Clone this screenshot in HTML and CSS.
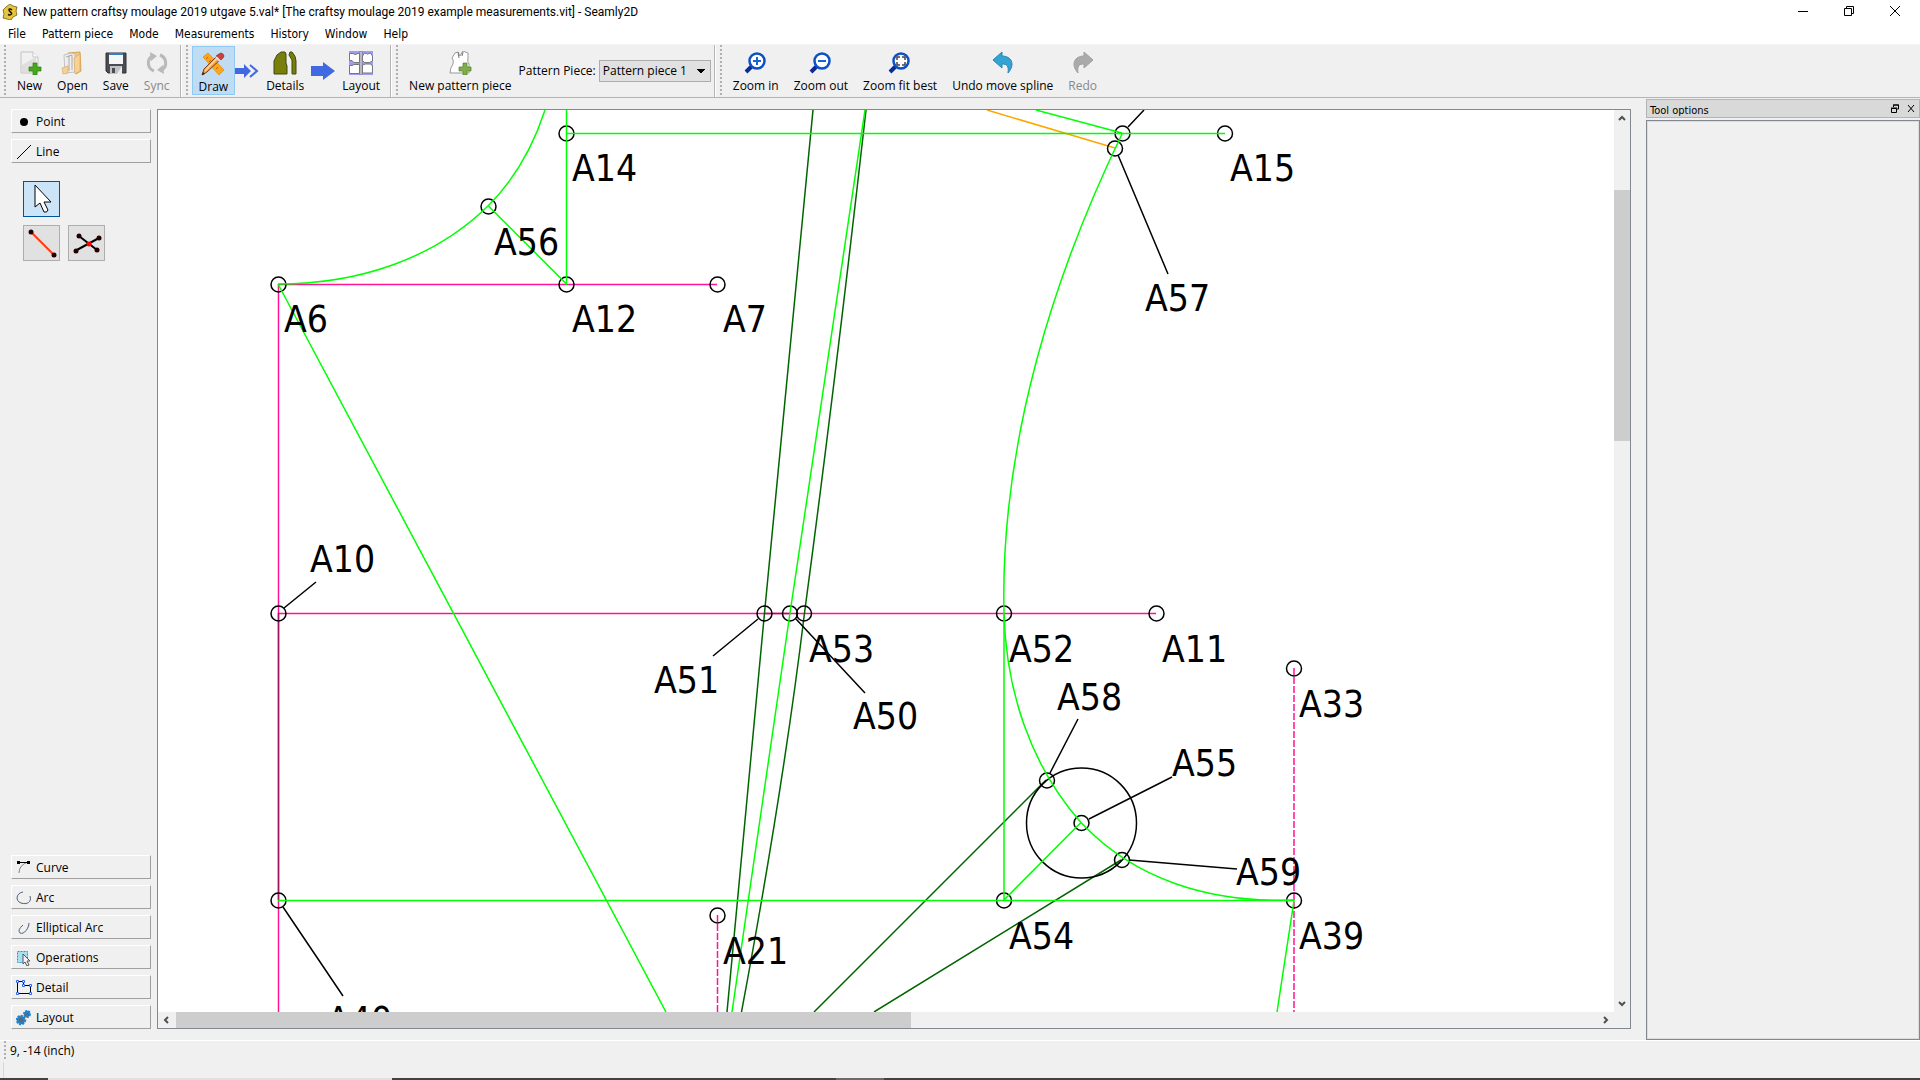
FILE: index.html
```
<!DOCTYPE html>
<html lang="en">
<head>
	<meta charset="utf-8">
	<meta name="viewport" content="width=device-width, initial-scale=1">
	<title>Seamly2D</title>
	<link rel="stylesheet" href="styles.css">
</head>
<body>
	<header class="titlebar">
		<svg class="app-icon" width="16" height="16" viewBox="0 0 16 16">
			<path d="M4 3L8 0l3 2 4 1-1 4 1 4-4 2-2 3-4-1-4-1 1-4-1-4z" fill="#e8c63c" stroke="#6b5a17" stroke-width=".8"/>
			<path d="M10 6C8 4 6 5 7.500 7s3 2 1.500 3.500c-1 1-2 .5-3 0" fill="none" stroke="#1d1a08" stroke-width="1.500"/>
		</svg>
		<h1 class="title">New pattern craftsy moulage 2019 utgave 5.val* [The craftsy moulage 2019 example measurements.vit] - Seamly2D</h1>
		<div class="window-buttons">
			<button aria-label="Minimize"><svg width="10" height="10"><path d="M0 5.5h10"/></svg></button>
			<button aria-label="Restore"><svg width="10" height="10"><path d="M.5 2.5h7v7h-7zM2.5 2.5v-2h7v7h-2"/></svg></button>
			<button aria-label="Close"><svg width="10" height="10"><path d="M0 0l10 10M10 0L0 10"/></svg></button>
		</div>
	</header>

	<nav class="menubar">
		<button>File</button>
		<button>Pattern piece</button>
		<button>Mode</button>
		<button>Measurements</button>
		<button>History</button>
		<button>Window</button>
		<button>Help</button>
	</nav>

	<div class="toolbars">
		<div class="toolbar">
			<button class="tool">
				<svg width="24" height="24" viewBox="0 0 24 24">
					<path d="M3 1h12l5 5v16H3z" fill="#f1f1f1" stroke="#c4c4c4"/>
					<path d="M4 14L18 6v15H4z" fill="#dedede"/>
					<path d="M15 1v5h5" fill="#fff" stroke="#c4c4c4"/>
					<path d="M15 12h4v4h4v4h-4v4h-4v-4h-4v-4h4z" fill="#48a81c" stroke="#2f7d13" stroke-width=".7"/>
				</svg>
				<span>New</span>
			</button>
			<button class="tool">
				<svg width="24" height="24" viewBox="0 0 24 24">
					<path d="M8 2l12-1 1 19-5 3z" fill="#f0c680" stroke="#d6a45a"/>
					<path d="M4 4l7-2 4 1v18l-10 1z" fill="#eee" stroke="#b6b6b6" stroke-width=".8"/>
					<path d="M6 6l6-2v15M9 5v15" fill="none" stroke="#999" stroke-width=".8"/>
					<path d="M2 17l6-2v7l-5 1zM14 7l6-4v17l-5 3z" fill="#f7d294" stroke="#d8aa64" stroke-width=".7"/>
				</svg>
				<span>Open</span>
			</button>
			<button class="tool">
				<svg width="24" height="24" viewBox="0 0 24 24">
					<path d="M2 2h20v20H4l-2-2z" fill="#4a4c52" stroke="#303238"/>
					<path d="M5 2h14v11H5z" fill="#f4f6f8"/>
					<path d="M5 2h14v2H5z" fill="#377fc4"/>
					<path d="M6 15h12v8H6z" fill="#bfc2c6"/>
					<path d="M8 17h3v5H8z" fill="#4a4c52"/>
					<path d="M18 15v8h-5z" fill="#ececec"/>
				</svg>
				<span>Save</span>
			</button>
			<button class="tool" disabled>
				<svg width="24" height="24" viewBox="0 0 24 24">
					<path d="M9 20A8.500 8.500 0 0 1 7 5M15 4a8.500 8.500 0 0 1 2 15" fill="none" stroke="#b9b9b9" stroke-width="3"/>
					<path d="M5 1l7 4-6 5zM19 23l-7-4 6-5z" fill="#b9b9b9"/>
				</svg>
				<span>Sync</span>
			</button>
		</div>

		<div class="toolbar">
			<button class="tool active">
				<svg width="24" height="24" viewBox="0 0 24 24">
					<path d="M2 5l5-4 16 17-5 5z" fill="#ffa51d" stroke="#e68600" stroke-width=".7"/>
					<path d="M5 7l2-2m1 5l2-2m5 9l2-2" stroke="#b86b00"/>
					<path d="M1 23l2-6L18 2l4 3L6 20z" fill="#f0a04a" stroke="#7d3e18"/>
					<path d="M4 19L18 4" stroke="#ffd7a0" stroke-width="1.5"/>
					<path d="M18 2q2-2 4 0t0 4l-2 2-5-4z" fill="#cf4040" stroke="#8e3333" stroke-width=".7"/>
					<path d="M15 5l4 4" stroke="#ddd" stroke-width="2"/>
					<path d="M1 23l1-3 2 2z" fill="#222"/>
				</svg>
				<span>Draw</span>
			</button>
			<svg class="flow" width="24" height="24" viewBox="0 0 24 24">
				<path d="M0 9h9V5l7 7-7 7v-4H0z" fill="#4169e1"/>
				<path d="M15 6l7 6-7 6" fill="none" stroke="#4169e1" stroke-width="2"/>
			</svg>
			<button class="tool">
				<svg width="24" height="24" viewBox="0 0 24 24">
					<path d="M1 23V10l3-6 4-3h4l1 2v9l1 3v8z" fill="#7a7e0a" stroke="#3f4a10"/>
					<path d="M17 1h2q4 4 4 9v13h-4V9l-3-5z" fill="#7a7e0a" stroke="#3f4a10"/>
				</svg>
				<span>Details</span>
			</button>
			<svg class="flow" width="24" height="24" viewBox="0 0 24 24">
				<path d="M0 7h12V3l12 9-12 9v-4H0z" fill="#4169e1"/>
			</svg>
			<button class="tool">
				<svg width="24" height="24" viewBox="0 0 24 24">
					<path d="M0 0h24v24H0z" fill="#9f9cf5"/>
					<path d="M.5 2.500H4l2 1 3-1h1.500v9H5l-2-2H.500zM.5 14.500H3l2-1h5.500v9H.500zM13.500 5l2-3 3 1 3-1 2 3v5l-3 1.500h-5l-2-2zM13.500 14l3-1h5l2 2v7h-10zM11 0h2v24h-2z" fill="#fff" stroke="#77777f"/>
				</svg>
				<span>Layout</span>
			</button>
		</div>

		<div class="toolbar">
			<button class="tool">
				<svg width="24" height="24" viewBox="0 0 24 24">
					<path d="M7 2l3-1 2 4 3-5 5 2v5q-1 4 1 6v9H2q0-5 3-9 1-4-1-6z" fill="#fff" stroke="#999"/>
					<path d="M10 1l1 6M15 1l-1 4" stroke="#777" fill="none"/>
					<path d="M15 12h4v4h4v4h-4v4h-4v-4h-4v-4h4z" fill="#7fae4b" stroke="#557d32" stroke-width=".7"/>
				</svg>
				<span>New pattern piece</span>
			</button>
			<div class="piece">
				<label for="piece">Pattern Piece:</label>
				<select id="piece"><option>Pattern piece 1</option></select>
			</div>
		</div>

		<div class="toolbar">
			<button class="tool">
				<svg width="24" height="24" viewBox="0 0 24 24">
					<path d="M8 15l-6 6" stroke="#0b2a94" stroke-width="4"/>
					<circle cx="13" cy="10" r="7.500" fill="#fff" stroke="#0d4fc4" stroke-width="2.500"/>
					<path d="M9 10h8M13 6v8" stroke="#1762d4" stroke-width="2"/>
				</svg>
				<span>Zoom in</span>
			</button>
			<button class="tool">
				<svg width="24" height="24" viewBox="0 0 24 24">
					<path d="M8 15l-6 6" stroke="#0b2a94" stroke-width="4"/>
					<circle cx="13" cy="10" r="7.500" fill="#fff" stroke="#0d4fc4" stroke-width="2.500"/>
					<path d="M9 10h8" stroke="#1762d4" stroke-width="2"/>
				</svg>
				<span>Zoom out</span>
			</button>
			<button class="tool">
				<svg width="24" height="24" viewBox="0 0 24 24">
					<path d="M8 15l-6 6" stroke="#0b2a94" stroke-width="4"/>
					<circle cx="13" cy="10" r="7.500" fill="#fff" stroke="#0d4fc4" stroke-width="2.500"/>
					<path d="M9 9V6h3M14 6h3v3M17 11v3h-3M12 14H9v-3" fill="none" stroke="#444" stroke-width="1.500"/>
				</svg>
				<span>Zoom fit best</span>
			</button>
			<button class="tool">
				<svg width="24" height="24" viewBox="0 0 24 24">
					<path d="M2 9l9-8v4c9 0 14 8 6 17 1-7-1-9-6-9v4z" fill="#32a3d2" stroke="#2585b4"/>
				</svg>
				<span>Undo move spline</span>
			</button>
			<button class="tool" disabled>
				<svg width="24" height="24" viewBox="0 0 24 24">
					<path d="M22 9l-9-8v4C4 5-1 13 7 22c-1-7 1-9 6-9v4z" fill="#aaa" stroke="#a0a0a0"/>
				</svg>
				<span>Redo</span>
			</button>
		</div>
	</div>

	<main class="workspace">
		<aside class="toolbox">
			<button class="group">
				<svg width="16" height="16"><circle cx="8" cy="8" r="4"/></svg>Point
			</button>
			<button class="group">
				<svg width="16" height="16"><path d="M1 15L15 1" stroke="#000"/></svg>Line
			</button>
			<div class="tool-grid">
				<button class="square selected" aria-label="Select">
					<svg width="32" height="32"><path d="M9 2v22l5-4 4 9q3 1 4-2l-4-8h7z" fill="#fff" stroke="#000"/></svg>
				</button>
				<div class="grid-row">
					<button class="square" aria-label="Line between points">
						<svg width="32" height="32"><path d="M5 5l23 23" stroke="#ff3a10" stroke-width="2"/><circle cx="5" cy="5" r="2.500" fill="#200"/><circle cx="28" cy="28" r="2.500" fill="#200"/></svg>
					</button>
					<button class="square" aria-label="Line intersection">
						<svg width="32" height="32"><path d="M8 9l18 14M28 11L4 24" stroke="#000" stroke-width="2"/><g fill="#200"><circle cx="8" cy="9" r="2.500"/><circle cx="26" cy="23" r="2.500"/><circle cx="28" cy="11" r="2.500"/><circle cx="5" cy="24" r="2.500"/></g><circle cx="18" cy="17" r="2.500" fill="#f00"/></svg>
					</button>
				</div>
			</div>
			<button class="group">
				<svg width="16" height="16"><path d="M3 13q0-8 9-11" fill="none" stroke="#758297"/><path d="M2 2.500h12" stroke="#000"/><path d="M1 1h3v3H1zM11 1h3v3h-3z"/></svg>Curve
			</button>
			<button class="group">
				<svg width="16" height="16"><path d="M7 2C0 3-1 11 5 13s11-1 9-7" fill="none" stroke="#506078"/></svg>Arc
			</button>
			<button class="group">
				<svg width="16" height="16"><path d="M7 5Q1 10 4 13c4 2 9-5 9-10" fill="none" stroke="#506078"/></svg>Elliptical Arc
			</button>
			<button class="group">
				<svg width="16" height="16"><path d="M1.500 1.500h10v11h-10z" fill="#a9dff3" stroke="#189ad6" stroke-dasharray="2 1"/><path d="M7 4v10l2-2 2 4 2-1-2-4h3z" fill="#f4f4f4" stroke="#555"/></svg>Operations
			</button>
			<button class="group">
				<svg width="16" height="16"><path d="M1.500 1.500v12h13v-8h-7v-4z" fill="none" stroke="#000"/><path d="M.5.500h2v2h-2zM6.500.500h2v2h-2zM6.500 4.500h2v2h-2zM13.500 4.500h2v2h-2zM.5 12.500h2v2h-2zM13.500 12.500h2v2h-2z" fill="#fff" stroke="#2b62e8"/></svg>Detail
			</button>
			<button class="group">
				<svg width="16" height="16"><g fill="#5c6670" stroke="#1687d9"><circle cx="5" cy="10" r="4" stroke-width="2.500" stroke-dasharray="2 1"/><circle cx="5" cy="10" r="2.500"/><circle cx="11" cy="4" r="3" stroke-width="2" stroke-dasharray="2 1"/><circle cx="11" cy="4" r="1.500"/></g></svg>Layout
			</button>
		</aside>

		<section class="view">
			<!-- the drawing keeps scene coordinates, shifted to the view's origin -->
			<svg class="scene">
				<g transform="translate(-158 -110)">
					<g class="pink">
						<path d="M278 284.500H717M278.500 284V1012M278 613.500H1156"/>
						<path class="dash" d="M1294 668V1012M717.500 915V1012"/>
					</g>
					<path class="orange" d="M987 110L1115 148"/>
					<path class="wine" d="M278.500 613V900M764 613.500H790"/>
					<g class="dark">
						<path d="M813 110L764.500 613 727 1012"/>
						<path d="M866 110Q835 385 804.500 613Q783 790 741.500 1012"/>
						<path d="M1046 780L814 1012M1121 860L874 1012"/>
					</g>
					<g class="points">
						<circle cx="566.500" cy="133.500" r="7.500"/>
						<circle cx="1225" cy="133.500" r="7.500"/>
						<circle cx="1122.500" cy="133.500" r="7.500"/>
						<circle cx="1115" cy="148.500" r="7.500"/>
						<circle cx="488.500" cy="206.500" r="7.500"/>
						<circle cx="278.500" cy="284.500" r="7.500"/>
						<circle cx="566.500" cy="284.500" r="7.500"/>
						<circle cx="717.500" cy="284.500" r="7.500"/>
						<circle cx="278.500" cy="613.500" r="7.500"/>
						<circle cx="764.500" cy="613.500" r="7.500"/>
						<circle cx="790" cy="613.500" r="7.500"/>
						<circle cx="804" cy="613.500" r="7.500"/>
						<circle cx="1004" cy="613.500" r="7.500"/>
						<circle cx="1156.500" cy="613.500" r="7.500"/>
						<circle cx="1294" cy="668.500" r="7.500"/>
						<circle cx="1047" cy="780.500" r="7.500"/>
						<circle cx="1081.500" cy="823" r="7.500"/>
						<circle cx="1122" cy="860" r="7.500"/>
						<circle cx="1004" cy="900.500" r="7.500"/>
						<circle cx="1294" cy="900.500" r="7.500"/>
						<circle cx="278.500" cy="900.500" r="7.500"/>
						<circle cx="717.500" cy="915.500" r="7.500"/>
						<circle cx="1081.500" cy="823" r="55"/>
					</g>
					<g class="green">
						<path d="M566 133.500H1225M566.500 110V284L488.500 206M1036 110L1122 133"/>
						<path d="M278 284C360 284 435 258 488 206C512 182 532 150 545 110"/>
						<path d="M278 284L666 1012M278 900.500H1294L1277 1012"/>
						<path d="M865 110L790 613 732 1012"/>
						<path d="M1122.500 133C1056 270 1000 440 1004 613V900L1081 822.500"/>
						<path d="M1004 613C1006 690 1030 765 1081 822.500C1135 880 1210 903 1294 900"/>
					</g>
					<g class="leaders">
						<path d="M1128 127L1144 110M1118 155L1168 274M284 608L316 582M758 619L713 656M796 619L865 693"/>
						<path d="M1050 773L1078 719M1089 819L1172 777M1129 860L1237 869M283 907L343 996"/>
					</g>
					<g class="labels">
						<text x="572" y="181">A14</text>
						<text x="1230" y="181">A15</text>
						<text x="494" y="255">A56</text>
						<text x="1145" y="311">A57</text>
						<text x="284" y="332">A6</text>
						<text x="572" y="332">A12</text>
						<text x="723" y="332">A7</text>
						<text x="310" y="572">A10</text>
						<text x="654" y="693">A51</text>
						<text x="809" y="662">A53</text>
						<text x="853" y="729">A50</text>
						<text x="1009" y="662">A52</text>
						<text x="1162" y="662">A11</text>
						<text x="1057" y="710">A58</text>
						<text x="1299" y="717">A33</text>
						<text x="1172" y="776">A55</text>
						<text x="1236" y="885">A59</text>
						<text x="1009" y="949">A54</text>
						<text x="1299" y="949">A39</text>
						<text x="723" y="964">A21</text>
						<text x="327" y="1033">A40</text>
					</g>
				</g>
			</svg>
			<div class="scroll vertical">
				<svg width="16" height="16"><path d="M5 10l3-3 3 3"/></svg>
				<div class="track"><div class="thumb"></div></div>
				<svg width="16" height="16"><path d="M5 6l3 3 3-3"/></svg>
			</div>
			<div class="scroll horizontal">
				<svg width="16" height="16"><path d="M10 5L7 8l3 3"/></svg>
				<div class="track"><div class="thumb"></div></div>
				<svg width="16" height="16"><path d="M6 5l3 3-3 3"/></svg>
			</div>
		</section>

		<aside class="dock">
			<div class="dock-title">
				<h2>Tool options</h2>
				<button aria-label="Float"><svg width="8" height="9"><path d="M2.500 3V1h5v4H6M2 1h6M.5 4.500h5v4h-5zM0 4h6"/></svg></button>
				<button aria-label="Close panel"><svg width="8" height="9"><path d="M1 1l6 7M7 1L1 8"/></svg></button>
			</div>
			<div class="dock-body"></div>
		</aside>
	</main>

	<footer class="status">
		<div class="position">9, -14 (inch)</div>
		<div class="message"></div>
	</footer>
	<div class="edge"><span></span><span></span></div>
</body>
</html>
```
FILE: styles.css
```
* {box-sizing: border-box;}
body {
	margin: 0;
	height: 100vh;
	overflow: hidden;
	display: flex;
	flex-direction: column;
	background: #f0f0f0;
	color: #000;
	font: 12px/16px "Open Sans", "Noto Sans", sans-serif;
}
button {
	font: inherit;
	color: inherit;
	background: none;
	border: none;
	padding: 0;
	margin: 0;
}
svg {display: block; flex: none;}
h1, h2 {margin: 0; font-size: 12px; font-weight: normal;}

/* title and menu */
.titlebar, .menubar {
	display: flex;
	align-items: center;
	background: #fff;
	font-family: "DejaVu Sans Condensed", "Noto Sans", sans-serif;
}
.titlebar {height: 23px; padding: 0 2px; gap: 5px;}
.title {flex: 1; white-space: nowrap; font-family: Roboto, "Noto Sans", sans-serif;}
.window-buttons {display: flex;}
.window-buttons button {width: 46px; height: 20px; padding-bottom: 2px; display: flex; justify-content: center; align-items: center;}
.window-buttons path {fill: none; stroke: #000;}
.menubar {height: 22px; border-bottom: 1px solid #f4f4f4;}
.menubar button {padding: 0 8px;}

/* toolbars */
.toolbars {
	display: flex;
	height: 53px;
	border-bottom: 1px solid #b4b4b4;
}
.toolbar {
	display: flex;
	padding: 1px 3px 2px 10px;
	border-left: 1px solid #fff;
	border-right: 1px solid #b4b4b4;
	background: radial-gradient(circle, #b0b0b0 1px, transparent 1px) 3px 3px / 4px 4px repeat-y;
}
.toolbar:first-child {border-left: none;}
.toolbar:last-child {border-right: none;}
.tool {
	display: flex;
	flex-direction: column;
	align-items: center;
	gap: 3px;
	padding: 4px 6px 0;
	border: 1px solid transparent;
	white-space: nowrap;
}
.tool + .tool {margin-left: 1px;}
.tool:disabled {color: #888;}
.tool.active {background: #c0dcf3; border-color: #90c8f6; padding-top: 5px;}
.flow {margin-top: 13px;}
.piece {display: flex; align-items: center; padding-top: 1px;}
.piece select {
	appearance: none;
	width: 112px;
	height: 22px;
	margin-left: 3px;
	padding: 0 3px;
	border: 1px solid #adadad;
	border-radius: 0;
	color: #000;
	background: #e1e1e1;
	background-image: linear-gradient(to top right, transparent 50%, #000 50%), linear-gradient(to top left, transparent 50%, #000 50%);
	background-size: 4px 4px;
	background-position: 97px 8px, 101px 8px;
	background-repeat: no-repeat;
	font: inherit;
}

/* left panel, drawing, right panel */
.workspace {flex: 1; display: flex; min-height: 0;}
.toolbox {
	width: 157px;
	padding: 11px 6px 11px 11px;
	display: flex;
	flex-direction: column;
	gap: 6px;
}
.group {
	display: flex;
	align-items: center;
	gap: 4px;
	height: 24px;
	padding: 1px 0 0 4px;
	border: 1px solid #a0a0a0;
	border-top-color: #fff;
	border-left-color: #fff;
}
.tool-grid {flex: 1; padding: 12px;}
.grid-row {display: flex; gap: 8px; margin-top: 8px;}
.square {display: block; width: 37px; height: 36px; padding: 0 2px; border: 1px solid #adadad; background: #e1e1e1;}
.square.selected {border-color: #005499; background: #cce4f7;}

.view {
	flex: 1;
	margin: 11px 0;
	border: 1px solid #828790;
	display: grid;
	grid-template-columns: 1fr 16px;
	grid-template-rows: 1fr 16px;
	min-width: 0;
}
.scene {width: 100%; height: 100%; background: #fff; overflow: hidden;}
.scene path, .scene circle {fill: none; stroke-width: 1.5px;}
.pink {stroke: #ff1493;}
.dash {stroke-dasharray: 7 2;}
.orange {stroke: #ffa500;}
.wine {stroke: #a01560;}
.dark {stroke: #006400;}
.green {stroke: #0f0;}
.points, .leaders {stroke: #000;}
.labels {font-family: "DejaVu Sans Condensed", "Noto Sans", sans-serif; font-size: 37px;}
.scroll {display: flex; background: #f0f0f0;}
.scroll path {fill: none; stroke: #505050; stroke-width: 2px;}
.scroll .track {flex: 1; display: flex;}
.scroll .thumb {background: #cdcdcd;}
.vertical {flex-direction: column;}
.vertical .track {flex-direction: column; padding-top: 64px;}
.vertical .thumb {height: 31.2%;}
.horizontal .track {padding-left: 2px;}
.horizontal .thumb {width: 51.7%;}

.dock {
	width: 289px;
	padding: 1px 0 0 15px;
	display: flex;
	flex-direction: column;
	gap: 2px;
}
.dock-title {
	display: flex;
	align-items: center;
	gap: 8px;
	height: 19px;
	padding: 0 4px 0 3px;
	border: 1px solid #b4b4b4;
	background: #d9d9d9;
}
.dock-title h2 {flex: 1; padding-top: 4px; font-family: "DejaVu Sans Condensed", "Noto Sans", sans-serif; font-size: 11px;}
.dock-title path {fill: none; stroke: #000;}
.dock-body {flex: 1; border: 1px solid #828790; box-shadow: inset 0 0 0 1px #dcdcdc;}

/* status bar and the sliver of desktop under it */
.status {height: 38px; border-top: 1px solid #fff;}
.position {
	padding: 2px 0 0 10px;
	background: radial-gradient(circle, #b0b0b0 1px, transparent 1px) 3px 3px / 4px 4px repeat-y;
}
.message {height: 16px; margin: 3px 0 0 3px; border-left: 1px solid #d8d8d8;}
.edge {display: flex; height: 2px; background: #424246;}
.edge span {width: 344px; margin-left: 48px; background: #e0e0e0;}
.edge span + span {width: 48px; margin-left: 444px; background: #6b6b6f;}
```
